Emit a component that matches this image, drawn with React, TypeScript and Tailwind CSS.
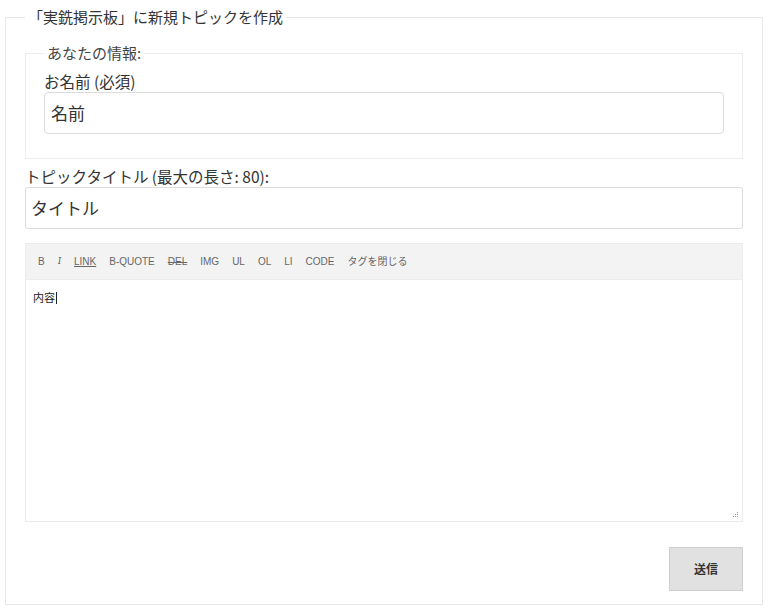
import React from "react";

const tools = [
  { label: "B", cls: "" },
  { label: "I", cls: "italic font-serif" },
  { label: "LINK", cls: "underline" },
  { label: "B-QUOTE", cls: "" },
  { label: "DEL", cls: "line-through" },
  { label: "IMG", cls: "" },
  { label: "UL", cls: "" },
  { label: "OL", cls: "" },
  { label: "LI", cls: "" },
  { label: "CODE", cls: "" },
  { label: "タグを閉じる", cls: "" },
];

export default function App() {
  return (
    <div className="h-[608px] w-[768px] bg-white text-[#333] font-['Noto_Sans_CJK_JP','Liberation_Sans',sans-serif]">
      <fieldset className="ml-[5px] mt-[7px] h-[598px] w-[758px] border border-[#e8e8e8] px-[19px] pt-[16px]">
        <legend className="px-[3px] text-[15px] leading-[20px]">「実銑掲示板」に新規トピックを作成</legend>

        <fieldset className="h-[116px] w-[718px] border border-[#ededed] px-[18px] pt-[8px]">
          <legend className="ml-[1px] px-[2px] text-[15px] leading-[20px] text-[#444]">あなたの情報:</legend>
          <label className="block text-[15.5px] leading-[20px]">お名前 (必須)</label>
          <div className="mt-[1px] flex h-[42px] w-[680px] items-center rounded-[4px] border border-[#dcdcdc] px-[6px] text-[17px]">名前</div>
        </fieldset>

        <label className="mt-[7px] block text-[15.5px] leading-[21px]">トピックタイトル (最大の長さ: 80):</label>
        <div className="flex h-[42px] w-[718px] items-center rounded-[3px] border border-[#dcdcdc] px-[5px] text-[17px]">タイトル</div>

        <div className="mt-[14px] w-[718px] border border-[#ececec]">
          <div className="flex h-[35px] items-center gap-[13px] bg-[#f3f3f3] pl-[12px] font-['Liberation_Sans','Noto_Sans_CJK_JP',sans-serif] text-[10px] text-[#666]">
            {tools.map((t) => (
              <span key={t.label} className={t.cls}>{t.label}</span>
            ))}
          </div>
          <div className="relative h-[242px] border-t border-[#ececec] px-[7px] pt-[9px] text-[11px] text-[#222]">
            <span>内容</span>
            <span className="ml-px inline-block h-[12px] w-px translate-y-[2px] bg-[#222]" />
            <svg className="absolute bottom-[3px] right-[3px]" width="7" height="7" viewBox="0 0 7 7">
              <rect x="5" y="1" width="1" height="1" fill="#999" />
              <rect x="3" y="3" width="1" height="1" fill="#999" />
              <rect x="5" y="3" width="1" height="1" fill="#999" />
              <rect x="1" y="5" width="1" height="1" fill="#999" />
              <rect x="3" y="5" width="1" height="1" fill="#999" />
              <rect x="5" y="5" width="1" height="1" fill="#999" />
            </svg>
          </div>
        </div>

        <div className="mt-[25px] flex w-[718px] justify-end">
          <button className="h-[44px] w-[74px] border border-[#cfcfcf] bg-[#e1e1e1] text-[12px] font-semibold text-[#333]">送信</button>
        </div>
      </fieldset>
    </div>
  );
}
